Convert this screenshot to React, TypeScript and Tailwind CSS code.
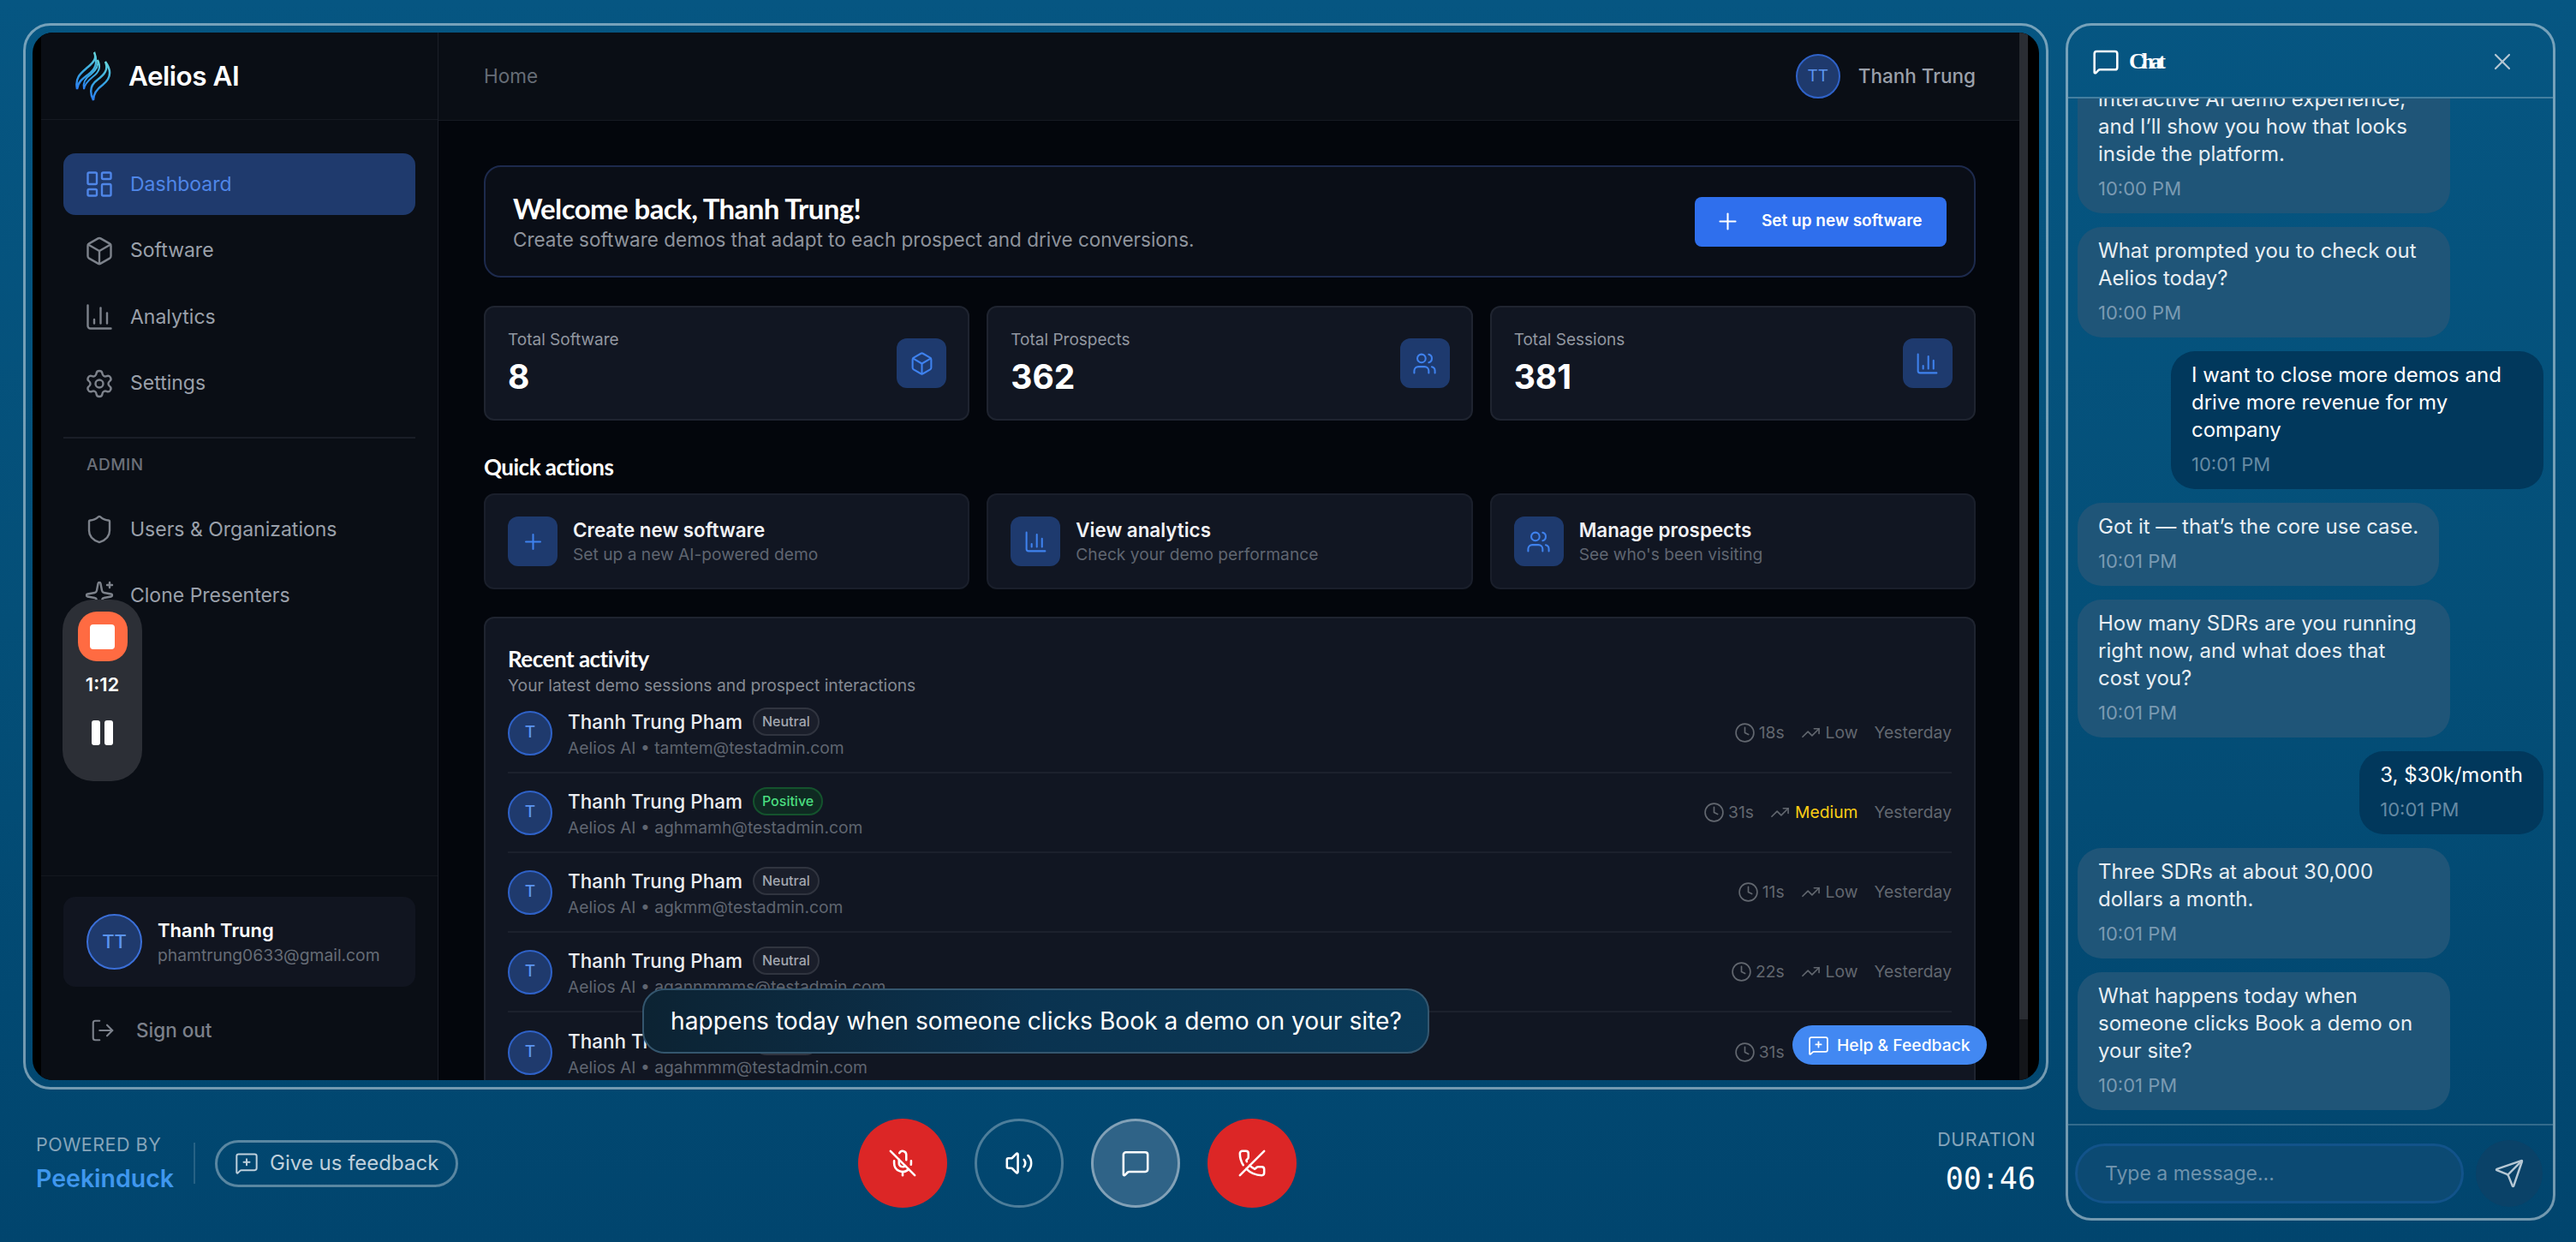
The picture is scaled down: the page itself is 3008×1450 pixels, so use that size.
import {
  Box,
  ChartColumn,
  Clock,
  LayoutDashboard,
  LogOut,
  MessageSquare,
  MessageSquarePlus,
  MicOff,
  PhoneOff,
  Plus,
  Send,
  Settings,
  Shield,
  Sparkles,
  TrendingUp,
  Users,
  Volume2,
  X,
} from "lucide-react";

const inter = "font-['Inter',sans-serif]";
const display = "font-['Lato',sans-serif]";

const Logo = () => (
  <svg width="44" height="58" viewBox="0 0 44 58" fill="none">
    <defs>
      <linearGradient id="flame" x1="0" y1="0" x2="0" y2="1">
        <stop offset="0" stopColor="#66d6dc" />
        <stop offset="0.5" stopColor="#38a8e0" />
        <stop offset="1" stopColor="#2b7df0" />
      </linearGradient>
    </defs>
    <path d="M23 1c3 7 0 11-7 17C8 25 0 30 3 44c1-8 6-12 13-17 8-6 12-13 7-26z" stroke="url(#flame)" strokeWidth="2.4" />
    <path d="M36 12c4 9-1 15-9 21-7 5-11 12-5 24 0-8 4-13 11-18 9-7 11-16 3-27z" stroke="url(#flame)" strokeWidth="2.4" />
    <path d="M27 10c2 7-2 12-8 17-6 4-10 9-8 17 1-6 5-10 10-14 7-5 11-11 6-20z" stroke="url(#flame)" strokeWidth="2" />
  </svg>
);

const navItems = [
  { icon: LayoutDashboard, label: "Dashboard", active: true },
  { icon: Box, label: "Software" },
  { icon: ChartColumn, label: "Analytics" },
  { icon: Settings, label: "Settings" },
];

const NavRow = ({ icon: Icon, label, active }: { icon: typeof Box; label: string; active?: boolean }) => (
  <div className={`flex h-[72px] items-center gap-[18px] rounded-[14px] pl-[24px] text-[23px] ${active ? "bg-[#1f3a6d] text-[#4f86e8]" : "text-[#9aa0aa]"}`}>
    <Icon size={36} strokeWidth={1.6} className={active ? "text-[#4f86e8]" : "text-[#7d828b]"} />
    <span>{label}</span>
  </div>
);

const Sidebar = () => (
  <aside className="flex w-[464px] shrink-0 flex-col border-r border-[#1b1f28] bg-[#0a0e15]">
    <div className="flex h-[102px] shrink-0 items-center gap-[19px] border-b border-[#161a22] pl-[39px]">
      <Logo />
      <span className="text-[31.5px] font-semibold tracking-[-0.5px] text-white">Aelios AI</span>
    </div>
    <nav className="flex flex-col gap-[5.5px] px-[26px] pt-[39px]">
      {navItems.map((item) => (
        <NavRow key={item.label} {...item} />
      ))}
    </nav>
    <div className="mx-[26px] mt-[26px] border-t-2 border-[#1a1e27]" />
    <div className="pl-[53px] pt-[17px] text-[19px] font-medium tracking-[0.5px] text-[#6b7079]">ADMIN</div>
    <div className="mt-[25px] flex flex-col gap-[5px] px-[26px]">
      <NavRow icon={Shield} label="Users & Organizations" />
      <NavRow icon={Sparkles} label="Clone Presenters" />
    </div>
    <div className="mt-auto border-t border-[#14181f] px-[26px] pb-[7px] pt-[24px]">
      <div className="flex h-[105px] items-center gap-[18px] rounded-[14px] bg-[#111520] pl-[27px]">
        <div className="flex h-[65px] w-[65px] items-center justify-center rounded-full border-2 border-[#3b6fd8] bg-[#1f3a6d] text-[22px] font-medium text-[#5b94f0]">TT</div>
        <div>
          <div className="text-[22px] font-semibold leading-[30px] text-white">Thanh Trung</div>
          <div className="text-[19.3px] leading-[28px] text-[#666c76]">phamtrung0633@gmail.com</div>
        </div>
      </div>
      <div className="flex h-[102px] items-center gap-[24px] pl-[31px] text-[22.5px] font-medium text-[#7b808a]">
        <LogOut size={30} strokeWidth={1.7} />
        <span>Sign out</span>
      </div>
    </div>
  </aside>
);

const stats = [
  { label: "Total Software", value: "8", icon: Box },
  { label: "Total Prospects", value: "362", icon: Users },
  { label: "Total Sessions", value: "381", icon: ChartColumn },
];

const actions = [
  { title: "Create new software", sub: "Set up a new AI-powered demo", icon: Plus },
  { title: "View analytics", sub: "Check your demo performance", icon: ChartColumn },
  { title: "Manage prospects", sub: "See who's been visiting", icon: Users },
];

const rows = [
  { mood: "Neutral", email: "tamtem@testadmin.com", time: "18s", level: "Low" },
  { mood: "Positive", email: "aghmamh@testadmin.com", time: "31s", level: "Medium" },
  { mood: "Neutral", email: "agkmm@testadmin.com", time: "11s", level: "Low" },
  { mood: "Neutral", email: "agannmmms@testadmin.com", time: "22s", level: "Low" },
  { mood: "Neutral", email: "agahmmm@testadmin.com", time: "31s", level: "Low" },
];

const IconTile = ({ icon: Icon }: { icon: typeof Box }) => (
  <div className="flex h-[58px] w-[58px] shrink-0 items-center justify-center rounded-[12px] bg-[#1e3a6e] text-[#3f82ee]">
    <Icon size={29} strokeWidth={1.7} />
  </div>
);

const ActivityRow = ({ mood, email, time, level, last }: (typeof rows)[number] & { last: boolean }) => (
  <div className={`flex h-[93px] shrink-0 items-center ${last ? "" : "border-b-2 border-[#1c212d]"}`}>
    <div className="flex h-[52px] w-[52px] shrink-0 items-center justify-center rounded-full border-2 border-[#2f62c8] bg-[#1f3a6d] text-[19px] font-medium text-[#5b94f0]">T</div>
    <div className="ml-[18px] mt-[2px]">
      <div className="flex items-center gap-[12px]">
        <span className="text-[22.5px] font-medium leading-[32px] text-[#eceef2]">Thanh Trung Pham</span>
        {mood === "Positive" ? (
          <span className="rounded-full border-2 border-[#14532d] bg-[#0f2a22] px-[9px] text-[16px] font-medium leading-[29px] text-[#4ade80]">Positive</span>
        ) : (
          <span className="rounded-full border-2 border-[#30343f] bg-[#1a1e2a] px-[9px] text-[16px] font-medium leading-[29px] text-[#a3a7b0]">Neutral</span>
        )}
      </div>
      <div className="text-[19.3px] leading-[28px] text-[#5f6570]">Aelios AI • {email}</div>
    </div>
    <div className="ml-auto flex items-center gap-[19px] text-[19.3px] text-[#62676f]">
      <span className="flex items-center gap-[4px]">
        <Clock size={25} strokeWidth={1.6} />
        {time}
      </span>
      <span className="flex items-center gap-[6px]">
        <TrendingUp size={23} strokeWidth={1.7} />
        <span className={level === "Medium" ? "text-[#facc15]" : ""}>{level}</span>
      </span>
      <span>Yesterday</span>
    </div>
  </div>
);

const Main = () => (
  <main className="flex min-w-0 flex-1 flex-col bg-[#03060c]">
    <header className="flex h-[103px] shrink-0 items-center justify-between border-b border-[#161a22] bg-[#0a0e15] pl-[53px] pr-[51px]">
      <span className="text-[22.5px] text-[#666c76]">Home</span>
      <div className="flex items-center gap-[21px]">
        <div className="flex h-[52px] w-[52px] items-center justify-center rounded-full border-2 border-[#2f62c8] bg-[#1f3a6d] text-[19px] text-[#5b94f0]">TT</div>
        <span className="text-[22.5px] font-medium text-[#9aa0aa]">Thanh Trung</span>
      </div>
    </header>
    <div className="flex min-h-0 flex-1 flex-col overflow-hidden pl-[53px] pr-[51px] pt-[52px]">
      <section className="flex h-[131px] shrink-0 items-center justify-between rounded-[20px] border-2 border-[#1d2a4d] bg-[#0a0e17] pl-[32px] pr-[32px]">
        <div>
          <h1 className={`${display} text-[33px] font-bold leading-[42px] tracking-[-0.6px] text-white`}>Welcome back, Thanh Trung!</h1>
          <p className="text-[22.5px] leading-[32px] text-[#8e939c]">Create software demos that adapt to each prospect and drive conversions.</p>
        </div>
        <button className="flex h-[58px] w-[294px] items-center gap-[24px] rounded-[8px] bg-[#2f6fed] pl-[23px] text-[19px] font-semibold text-white">
          <Plus size={31} strokeWidth={1.6} />
          Set up new software
        </button>
      </section>

      <div className="mt-[33px] grid shrink-0 grid-cols-3 gap-[20px]">
        {stats.map((s) => (
          <div key={s.label} className="flex h-[134px] items-center justify-between rounded-[12px] border-2 border-[#1f2430] bg-[#111622] pl-[26px] pr-[25px]">
            <div>
              <div className="text-[19px] leading-[28px] text-[#9297a0]">{s.label}</div>
              <div className="mt-[4px] text-[39px] font-bold leading-[50px] text-white">{s.value}</div>
            </div>
            <IconTile icon={s.icon} />
          </div>
        ))}
      </div>

      <h2 className={`${display} mt-[38px] shrink-0 text-[26px] font-bold leading-[32px] tracking-[-0.5px] text-white`}>Quick actions</h2>

      <div className="mt-[15px] grid shrink-0 grid-cols-3 gap-[20px]">
        {actions.map((a) => (
          <div key={a.title} className="flex h-[112px] items-center gap-[18px] rounded-[12px] border-2 border-[#1a1f2b] bg-[#111622] pl-[26px]">
            <IconTile icon={a.icon} />
            <div>
              <div className="text-[22.4px] font-semibold leading-[30px] text-[#f0f1f4]">{a.title}</div>
              <div className="text-[19.2px] leading-[27px] text-[#5f6570]">{a.sub}</div>
            </div>
          </div>
        ))}
      </div>

      <section className="mt-[32px] flex min-h-0 flex-1 flex-col rounded-t-[12px] border-2 border-b-0 border-[#1f2430] bg-[#111622] pl-[26px] pr-[26px] pt-[30px]">
        <h2 className={`${display} text-[26px] font-bold leading-[34px] tracking-[-0.5px] text-white`}>Recent activity</h2>
        <p className="text-[19.3px] leading-[28px] text-[#858a93]">Your latest demo sessions and prospect interactions</p>
        <div className="-mt-[4px] flex flex-col">
          {rows.map((r, i) => (
            <ActivityRow key={r.email} {...r} last={i === rows.length - 1} />
          ))}
        </div>
      </section>
    </div>
  </main>
);

const messages: { from: "bot" | "me"; text: string; time: string }[] = [
  { from: "bot", text: "interactive AI demo experience, and I’ll show you how that looks inside the platform.", time: "10:00 PM" },
  { from: "bot", text: "What prompted you to check out Aelios today?", time: "10:00 PM" },
  { from: "me", text: "I want to close more demos and drive more revenue for my company", time: "10:01 PM" },
  { from: "bot", text: "Got it — that’s the core use case.", time: "10:01 PM" },
  { from: "bot", text: "How many SDRs are you running right now, and what does that cost you?", time: "10:01 PM" },
  { from: "me", text: "3, $30k/month", time: "10:01 PM" },
  { from: "bot", text: "Three SDRs at about 30,000 dollars a month.", time: "10:01 PM" },
  { from: "bot", text: "What happens today when someone clicks Book a demo on your site?", time: "10:01 PM" },
];

const ChatPanel = () => (
  <aside className="flex h-[1398px] w-[572px] shrink-0 flex-col overflow-hidden rounded-[30px] border-[3px] border-white/45">
    <div className="flex h-[85px] shrink-0 items-center border-b-2 border-white/25 pl-[28px] pr-[43px]">
      <MessageSquare size={32} strokeWidth={1.9} className="text-white" />
      <span className="ml-[11px] font-['Liberation_Serif',serif] text-[26px] font-bold tracking-[-4px] text-white">Chat</span>
      <X size={32} strokeWidth={1.6} className="ml-auto text-[#b5c7d4]" />
    </div>
    <div className="flex min-h-0 flex-1 flex-col justify-end gap-[16px] overflow-hidden border-b-2 border-white/20 px-[11px] pb-[16px]">
      {messages.map((m, i) => (
        <div
          key={i}
          className={`w-fit max-w-[435px] shrink-0 rounded-[28px] pb-[14px] pl-[24px] pr-[24px] pt-[12px] ${m.from === "me" ? "self-end bg-[#01385c] text-white" : "bg-[#1f5578] text-[#e8eef3]"}`}
        >
          <div className="text-[24px] leading-[32px]">{m.text}</div>
          <div className={`mt-[9px] text-[22px] leading-[30px] ${m.from === "me" ? "text-[#668aa3]" : "text-[#7a9ab2]"}`}>{m.time}</div>
        </div>
      ))}
    </div>
    <div className="flex h-[108px] shrink-0 items-center gap-[14px] pl-[8px] pt-[4px]">
      <input
        readOnly
        placeholder="Type a message..."
        className="h-[70px] w-[454px] rounded-full border-[3px] border-[#12538a] bg-[#0c4a73] pl-[32px] text-[23px] outline-none placeholder:text-[#6f93ad]"
      />
      <div className="flex h-[78px] w-[78px] items-center justify-center rounded-full bg-[#0a4268] text-[#b5c7d4]">
        <Send size={36} strokeWidth={1.6} />
      </div>
    </div>
  </aside>
);

const CallButton = ({ icon: Icon, tone }: { icon: typeof Box; tone: "red" | "ghost" | "on" }) => (
  <button
    className={`flex h-[104px] w-[104px] items-center justify-center rounded-full text-white ${
      tone === "red" ? "bg-[#dc2626]" : tone === "on" ? "border-[3px] border-white/40 bg-[#2f6387]" : "border-[3px] border-white/30"
    }`}
  >
    <Icon size={34} strokeWidth={1.8} />
  </button>
);

const BottomBar = () => (
  <div className="flex flex-1 items-center pb-[6px]">
    <div className="flex w-[975px] shrink-0 items-center pl-[15px]">
      <div>
        <div className="text-[21.5px] leading-[28px] tracking-[0.5px] text-[#86a5ba]">POWERED BY</div>
        <div className="mt-[8px] text-[28.5px] font-semibold leading-[36px] text-[#3f97ee]">Peekinduck</div>
      </div>
      <div className="ml-[23px] h-[48px] w-[2px] bg-white/15" />
      <button className="ml-[23px] flex h-[55px] w-[284px] items-center gap-[13px] rounded-full border-[3px] border-white/35 pl-[20px] text-[24px] text-[#bfd0dc]">
        <MessageSquarePlus size={28} strokeWidth={1.7} />
        Give us feedback
      </button>
    </div>
    <div className="flex gap-[32px]">
      <CallButton icon={MicOff} tone="red" />
      <CallButton icon={Volume2} tone="ghost" />
      <CallButton icon={MessageSquare} tone="on" />
      <CallButton icon={PhoneOff} tone="red" />
    </div>
    <div className="-mt-[2px] ml-auto pr-[15px] text-right">
      <div className="text-[21.5px] leading-[28px] tracking-[0.5px] text-[#86a5ba]">DURATION</div>
      <div className="mt-[10px] font-['DejaVu_Sans_Mono',monospace] text-[35px] leading-[44px] text-white">00:46</div>
    </div>
  </div>
);

export default function App() {
  return (
    <div className={`${inter} flex h-[1450px] w-[3008px] gap-[20px] overflow-hidden bg-linear-to-b from-[#065682] via-[#044f78] to-[#01456e] pl-[27px] pt-[27px]`}>
      <div className="flex w-[2365px] shrink-0 flex-col">
        <div className="relative h-[1245px] shrink-0 rounded-[32px] border-[3px] border-white/45 p-[8px]">
          <div className="flex h-full overflow-hidden rounded-[24px] bg-black pl-[10px] pr-[13px]">
            <Sidebar />
            <Main />
            {/* page scrollbar */}
            <div className="flex w-[10px] shrink-0 flex-col bg-[#14161a]">
              <div className="h-[1152px] bg-[#2a2d33]" />
            </div>
          </div>

          {/* recorder widget */}
          <div className="absolute left-[43px] top-[670px] flex h-[212px] w-[93px] flex-col items-center rounded-[36px] bg-[#2c2f36] pt-[14px]">
            <div className="flex h-[58px] w-[58px] items-center justify-center rounded-[22px] bg-[#ff6b42]">
              <div className="h-[29px] w-[29px] rounded-[4px] bg-white" />
            </div>
            <div className="mt-[13px] text-[22px] font-semibold leading-[28px] text-white">1:12</div>
            <div className="mt-[28px] flex gap-[5px]">
              <div className="h-[29px] w-[10px] rounded-[3px] bg-white" />
              <div className="h-[29px] w-[10px] rounded-[3px] bg-white" />
            </div>
          </div>

          {/* live caption */}
          <div className="absolute left-[720px] top-[1124px] flex h-[76px] w-[919px] items-center rounded-[26px] border-2 border-[#34566e] bg-linear-to-r from-[#0c2333] via-[#0a3350] to-[#0a3a58] pl-[31px] text-[28.2px] text-white">
            happens today when someone clicks Book a demo on your site?
          </div>

          <button className="absolute left-[2063px] top-[1167px] flex h-[46px] w-[227px] items-center gap-[9px] rounded-full bg-[#4288f2] pl-[18px] text-[19.3px] font-medium text-white">
            <MessageSquarePlus size={25} strokeWidth={1.7} />
            Help & Feedback
          </button>
        </div>
        <BottomBar />
      </div>
      <ChatPanel />
    </div>
  );
}
